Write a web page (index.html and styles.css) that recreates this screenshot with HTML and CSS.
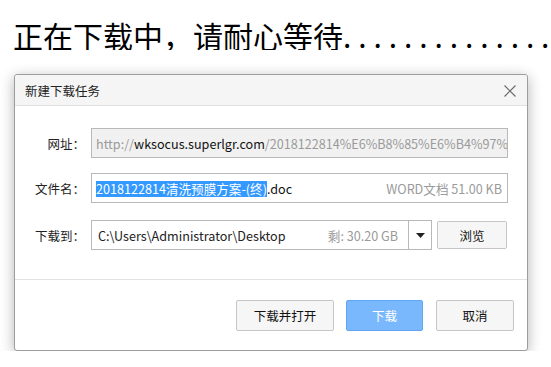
FILE: index.html
```html
<!DOCTYPE html>
<html lang="zh-CN">
<head>
  <meta charset="UTF-8" />
  <meta name="viewport" content="width=device-width, initial-scale=1.0"/>
  <title>新建下载任务</title>
  <link rel="stylesheet" href="styles.css">
</head>
<body>
  <h1 class="aviso">正在下载中，请耐心等待<span class="pontos">..............</span></h1>

  <div class="janela">
    <div class="janela-topo">
      <span class="janela-titulo">新建下载任务</span>
      <span class="fechar">
        <svg width="12" height="12" viewBox="0 0 12 12"><path d="M0.5 0.5 L11.5 11.5 M11.5 0.5 L0.5 11.5" stroke="#666" stroke-width="1.1" fill="none"/></svg>
      </span>
    </div>

    <div class="janela-corpo">
      <div class="linha">
        <label>网址：</label>
        <div class="caixa caixa-url">
          <span class="cinza">http://</span><span class="escuro">wksocus.superlgr.com</span><span class="cinza">/2018122814%E6%B8%85%E6%B4%97%E</span>
        </div>
      </div>

      <div class="linha">
        <label>文件名：</label>
        <div class="caixa caixa-arquivo">
          <span class="nome"><span class="selecao">2018122814清洗预膜方案-(终)</span>.doc</span>
          <span class="cinza">WORD文档 51.00 KB</span>
        </div>
      </div>

      <div class="linha linha-destino">
        <label>下载到：</label>
        <div class="caixa caixa-destino">
          <span class="caminho">C:\Users\Administrator\Desktop</span>
          <span class="cinza livre">剩: 30.20 GB</span>
          <span class="seta"><svg width="9" height="5" viewBox="0 0 9 5"><path d="M0 0 H9 L4.5 5 Z" fill="#222"/></svg></span>
        </div>
        <button class="botao botao-procurar">浏览</button>
      </div>
    </div>

    <div class="janela-rodape">
      <button class="botao botao-abrir">下载并打开</button>
      <button class="botao botao-principal">下载</button>
      <button class="botao botao-cancelar">取消</button>
    </div>
  </div>
</body>
</html>
```

FILE: styles.css
```css
body {
  font-family: "Noto Sans CJK SC", sans-serif;
  background-color: #fff;
  margin: 0;
  padding: 0;
}

.aviso {
  margin: 0;
  padding: 20px 0 0 13px;
  font-size: 30px;
  line-height: 30px;
  font-weight: normal;
  color: #000;
  white-space: nowrap;
  overflow: hidden;
}

.pontos {
  letter-spacing: 6.9px;
}

.janela {
  margin: 24px 0 0 14px;
  width: 514px;
  box-sizing: border-box;
  background-color: #fff;
  border: 1px solid #9d9d9d;
  border-radius: 3px;
  box-shadow: 0 3px 14px rgba(0,0,0,0.3);
  font-size: 12px;
  color: #333;
}

.janela-topo {
  height: 30px;
  display: flex;
  align-items: center;
  justify-content: space-between;
  padding: 0 11px 0 10px;
  background-color: #f5f5f5;
  border-bottom: 1px solid #e2e2e2;
  border-radius: 3px 3px 0 0;
  font-size: 12.5px;
  color: #222;
}

.fechar {
  display: flex;
  margin-top: 2px;
}

.janela-corpo {
  padding: 22px 0 29px 0;
}

.linha {
  display: flex;
  align-items: center;
  height: 30px;
}

.linha + .linha {
  margin-top: 15px;
}

.linha.linha-destino {
  margin-top: 17px;
}

.linha label {
  width: 70px;
  margin-right: 6px;
  text-align: right;
  color: #222;
  font-size: 12.5px;
}

.caixa {
  box-sizing: border-box;
  height: 30px;
  width: 417px;
  border: 1px solid #b9b9b9;
  display: flex;
  align-items: center;
  white-space: nowrap;
  overflow: hidden;
  font-size: 12.6px;
}

.cinza {
  color: #9a9a9a;
}

.escuro {
  color: #111;
}

.caixa-url {
  background-color: #f1f1f1;
  padding-left: 4px;
}

.caixa-arquivo {
  justify-content: space-between;
  padding: 0 5px 0 4px;
}

.nome {
  color: #111;
}

.selecao {
  background-color: #3399ff;
  color: #fff;
  line-height: 16px;
  display: inline-block;
}

.caixa-destino {
  width: 341px;
  padding-left: 6px;
}

.caminho {
  flex: 1;
  color: #222;
}

.livre {
  margin-right: 10px;
}

.seta {
  width: 22px;
  height: 28px;
  border-left: 1px solid #b9b9b9;
  display: flex;
  align-items: center;
  justify-content: center;
}

.botao {
  font-family: "Noto Sans CJK SC", sans-serif;
  font-size: 12.5px;
  color: #111;
  background-color: #f6f6f6;
  border: 1px solid #c6c6c6;
  border-radius: 2px;
  height: 31px;
  padding: 0;
  cursor: pointer;
}

.botao-procurar {
  width: 70px;
  height: 28px;
  margin-left: 5px;
}

.janela-rodape {
  border-top: 1px solid #e2e2e2;
  padding: 20px 13px 19px 0;
  display: flex;
  justify-content: flex-end;
  gap: 12px;
}

.botao-abrir {
  width: 98px;
}

.botao-principal {
  width: 77px;
  background-color: #7ab8fd;
  border-color: #5fa6f4;
  color: #fff;
}

.botao-cancelar {
  width: 78px;
  margin-left: 1px;
}
```
